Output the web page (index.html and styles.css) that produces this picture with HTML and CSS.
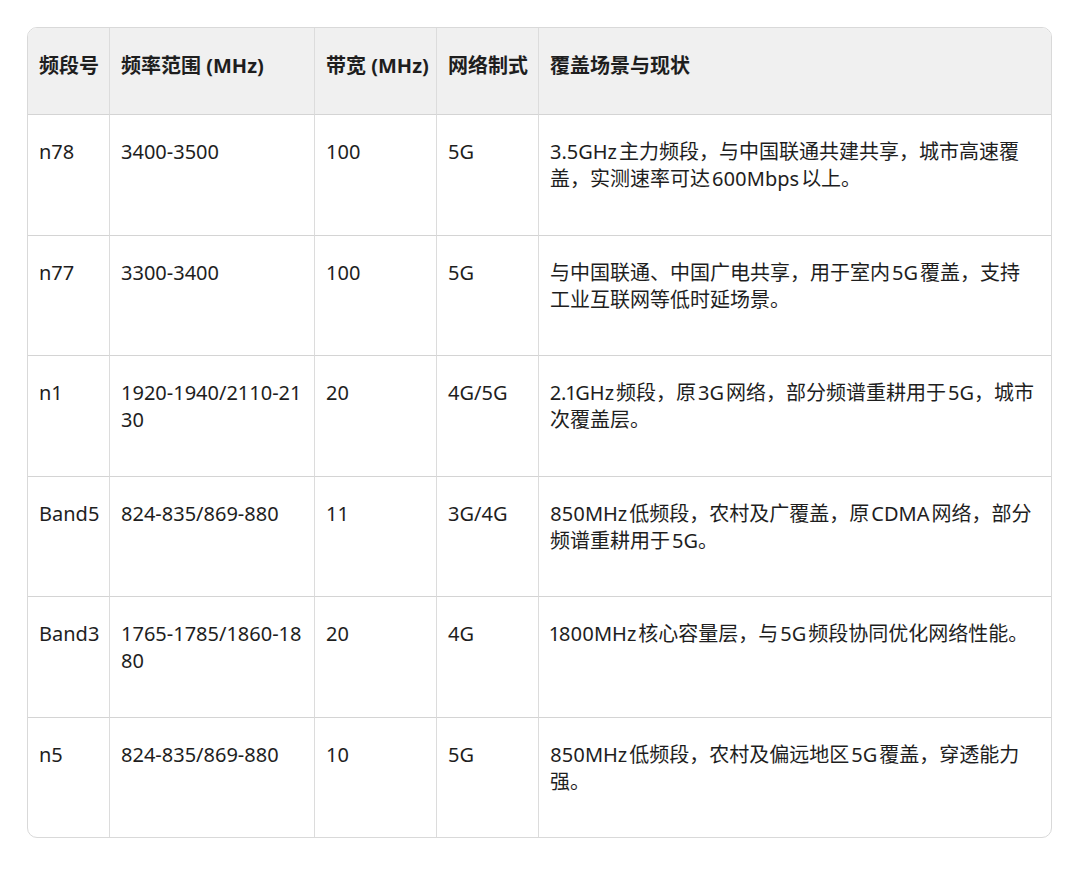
FILE: index.html
```html
<!DOCTYPE html>
<html lang="zh-CN">
<head>
<meta charset="utf-8">
<title>频段表</title>
<link rel="stylesheet" href="styles.css">
</head>
<body>
<div class="table-wrap">
  <table class="band-table">
    <colgroup>
      <col class="c-band">
      <col class="c-range">
      <col class="c-bw">
      <col class="c-net">
      <col class="c-desc">
    </colgroup>
    <thead>
      <tr>
        <th>频段号</th>
        <th>频率范围 (MHz)</th>
        <th>带宽 (MHz)</th>
        <th>网络制式</th>
        <th>覆盖场景与现状</th>
      </tr>
    </thead>
    <tbody>
      <tr>
        <td class="band">n78</td>
        <td class="range">3400-3500</td>
        <td>100</td>
        <td>5G</td>
        <td class="desc"><span class="lat start">3.5GHz</span>主力频段，与中国联通共建共享，城市高速覆盖，实测速率可达<span class="lat">600Mbps</span>以上。</td>
      </tr>
      <tr>
        <td class="band">n77</td>
        <td class="range">3300-3400</td>
        <td>100</td>
        <td>5G</td>
        <td class="desc">与中国联通、中国广电共享，用于室内<span class="lat">5G</span>覆盖，支持工业互联网等低时延场景。</td>
      </tr>
      <tr>
        <td class="band">n1</td>
        <td class="range">1920-1940/2110-2130</td>
        <td>20</td>
        <td>4G/5G</td>
        <td class="desc"><span class="lat start">2.1GHz</span>频段，原<span class="lat">3G</span>网络，部分频谱重耕用于<span class="lat end">5G</span>，城市次覆盖层。</td>
      </tr>
      <tr>
        <td class="band">Band5</td>
        <td class="range">824-835/869-880</td>
        <td>11</td>
        <td>3G/4G</td>
        <td class="desc"><span class="lat start">850MHz</span>低频段，农村及广覆盖，原<span class="lat">CDMA</span>网络，部分频谱重耕用于<span class="lat end">5G</span>。</td>
      </tr>
      <tr>
        <td class="band">Band3</td>
        <td class="range">1765-1785/1860-1880</td>
        <td>20</td>
        <td>4G</td>
        <td class="desc"><span class="lat start">1800MHz</span>核心容量层，与<span class="lat">5G</span>频段协同优化网络性能。</td>
      </tr>
      <tr>
        <td class="band">n5</td>
        <td class="range">824-835/869-880</td>
        <td>10</td>
        <td>5G</td>
        <td class="desc"><span class="lat start">850MHz</span>低频段，农村及偏远地区<span class="lat">5G</span>覆盖，穿透能力强。</td>
      </tr>
    </tbody>
  </table>
</div>
</body>
</html>
```
FILE: styles.css
```css
html, body {
  margin: 0;
  background: #ffffff;
}

body {
  padding: 27px 16px 40px 27px;
  font-family: "Noto Sans", "Noto Sans CJK SC", sans-serif;
  color: #1e1e1e;
}

.table-wrap {
  width: 1025px;
  box-sizing: border-box;
  border: 1px solid #d9d9d9;
  border-radius: 10px;
  overflow: hidden;
}

.band-table {
  width: 100%;
  table-layout: fixed;
  border-collapse: separate;
  border-spacing: 0;
  font-size: 20px;
  line-height: 27px;
}

.c-band { width: 82px; }
.c-range { width: 205px; }
.c-bw { width: 122px; }
.c-net { width: 102px; }
.c-desc { width: auto; }

.band-table th,
.band-table td {
  box-sizing: border-box;
  text-align: left;
  vertical-align: top;
  border-right: 1px solid #dcdcdc;
  border-bottom: 1px solid #d4d4d4;
}

.band-table th:last-child,
.band-table td:last-child {
  border-right: none;
}

.band-table th {
  background: #f0f0f0;
  font-weight: 700;
  padding: 24px 4px 35px 11px;
  white-space: nowrap;
}

.band-table td {
  font-weight: 400;
  padding: 23px 10px 42.5px 11px;
}

.band-table td.band {
  padding-right: 2px;
  white-space: nowrap;
}

.band-table td.range {
  word-break: break-all;
}

.band-table td.desc {
  padding-right: 13px;
  font-variant-numeric: proportional-nums;
}

.lat {
  margin: 0 2px;
}

.lat.start {
  margin-left: 0;
}

.lat.end {
  margin-right: 0;
}

.band-table tbody tr:last-child td {
  border-bottom: none;
}
```
